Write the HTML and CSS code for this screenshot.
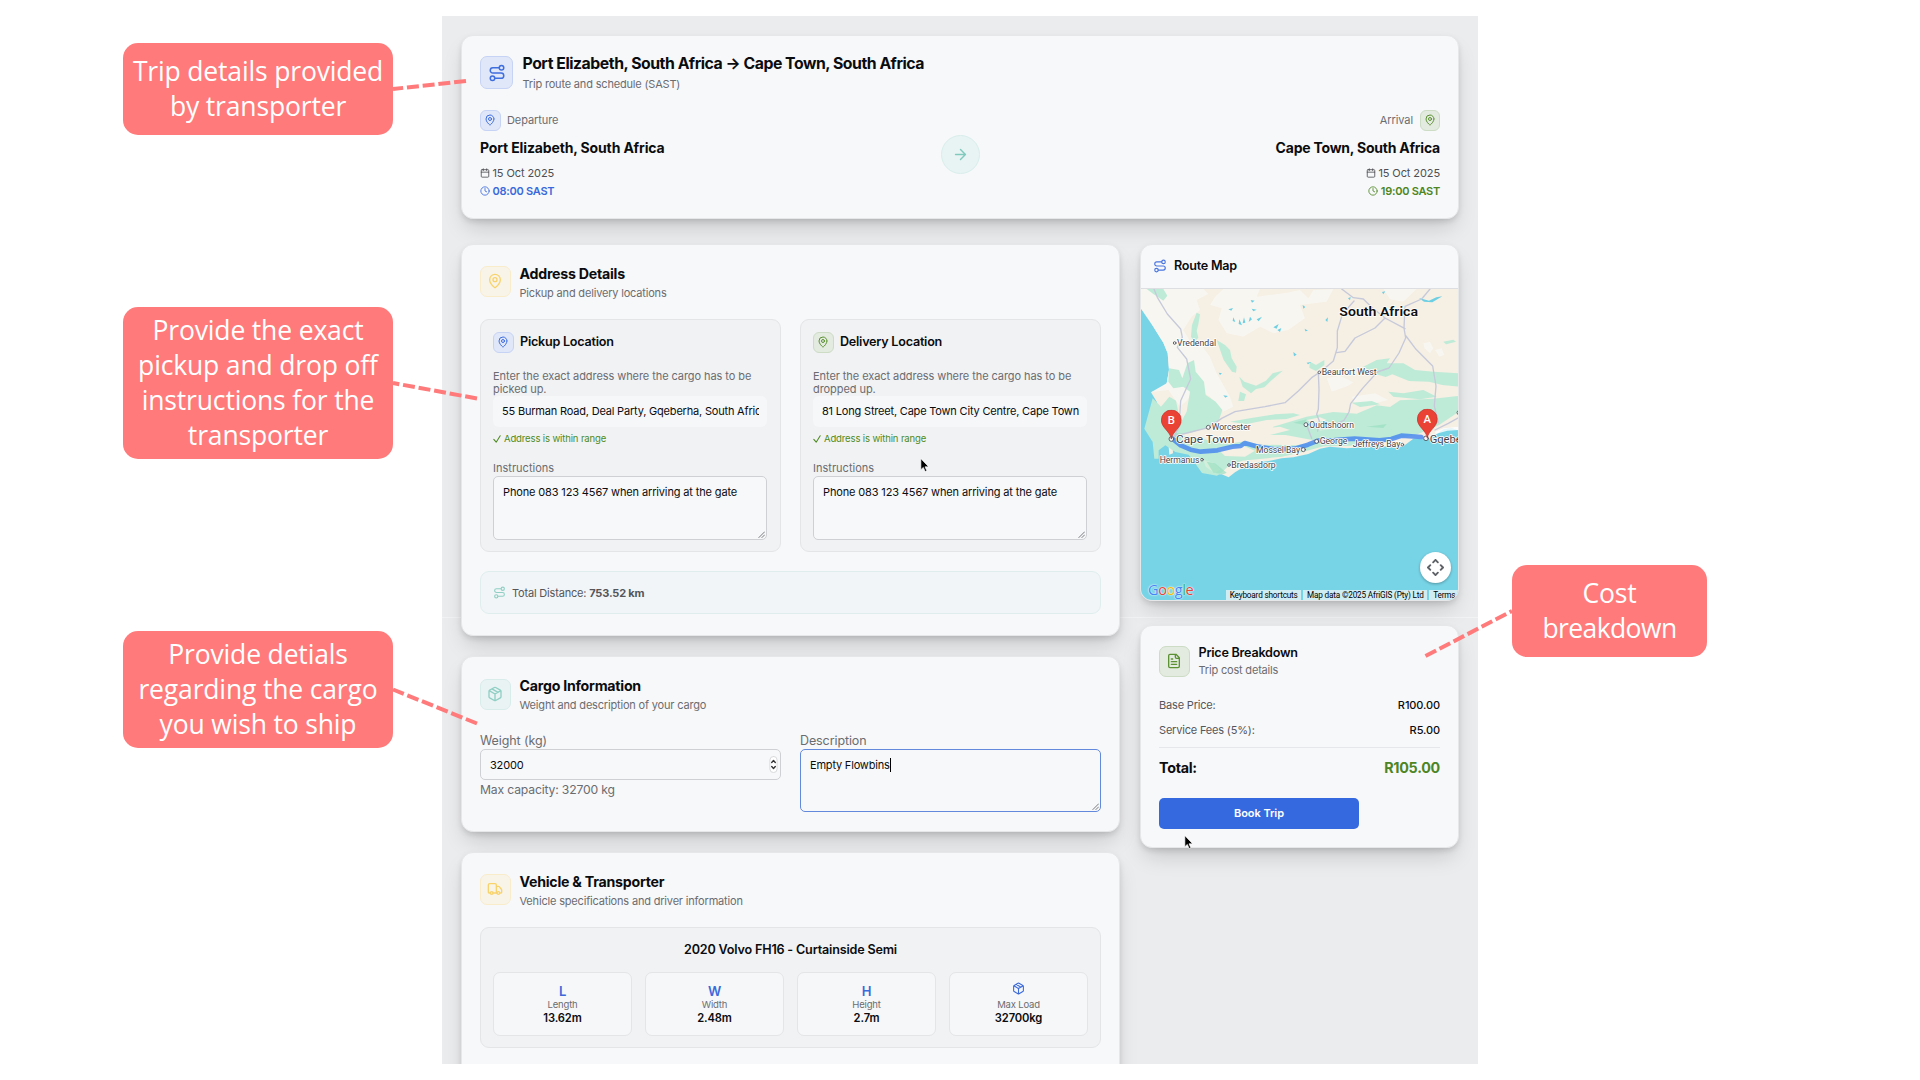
FILE: index.html
```html
<!DOCTYPE html>
<html lang="en">
<head>
<meta charset="utf-8">
<title>Trip booking guide</title>
<link rel="stylesheet" href="styles.css">
</head>
<body>
<svg class="sprite" aria-hidden="true">
  <symbol id="route" viewBox="0 0 24 24"><circle cx="6" cy="19" r="3"/><path d="M9 19h8.5a3.5 3.5 0 0 0 0-7h-11a3.5 3.5 0 0 1 0-7H15"/><circle cx="18" cy="5" r="3"/></symbol>
  <symbol id="pin" viewBox="0 0 24 24"><path d="M20 10c0 5-5.5 10.2-7.4 11.8a1 1 0 0 1-1.2 0C9.500 20.200 4 15 4 10a8 8 0 0 1 16 0"/><circle cx="12" cy="10" r="3"/></symbol>
  <symbol id="calendar" viewBox="0 0 24 24"><path d="M8 2v4M16 2v4M3 10h18"/><rect x="3" y="4" width="18" height="18" rx="2"/></symbol>
  <symbol id="clock" viewBox="0 0 24 24"><circle cx="12" cy="12" r="10"/><path d="M12 6v6l4 2"/></symbol>
  <symbol id="arrow" viewBox="0 0 24 24"><path d="M5 12h14M12 5l7 7-7 7"/></symbol>
  <symbol id="box" viewBox="0 0 24 24"><path d="M11 21.700a2 2 0 0 0 2 0l7-4a2 2 0 0 0 1-1.700V8a2 2 0 0 0-1-1.700l-7-4a2 2 0 0 0-2 0l-7 4A2 2 0 0 0 3 8v8a2 2 0 0 0 1 1.700zM12 22V12M3.300 7 12 12l8.700-5M7.500 4.300l9 5.150"/></symbol>
  <symbol id="truck" viewBox="0 0 24 24"><path d="M14 18V6a2 2 0 0 0-2-2H4a2 2 0 0 0-2 2v11a1 1 0 0 0 1 1h2M15 18H9M19 18h2a1 1 0 0 0 1-1v-3.650a1 1 0 0 0-.22-.62l-3.480-4.350A1 1 0 0 0 17.520 8H14"/><circle cx="17" cy="18" r="2"/><circle cx="7" cy="18" r="2"/></symbol>
  <symbol id="file" viewBox="0 0 24 24"><path d="M15 2H6a2 2 0 0 0-2 2v16a2 2 0 0 0 2 2h12a2 2 0 0 0 2-2V7zM14 2v4a2 2 0 0 0 2 2h4M10 9H8M16 13H8M16 17H8"/></symbol>
  <symbol id="pointer" viewBox="0 0 12 18"><path d="M1 1v13l3-2.700 2.200 5 2-1-2.200-4.700h4.200z" fill="#000" stroke="#fff" stroke-width=".8"/></symbol>
  <symbol id="marker" viewBox="0 0 62 90"><path d="M31 87C28 65 1 55 1 31a30 30 0 0 1 60 0C61 55 34 65 31 87z" fill="#ea4335" stroke="#c5221f" stroke-width="2"/></symbol>
</svg>

<div class="stage">
  <aside class="notes notes-left">
    <div class="callout note-trip"><span>Trip details provided</span><span>by transporter</span></div>
    <div class="callout note-address"><span>Provide the exact</span><span>pickup and drop off</span><span>instructions for the</span><span>transporter</span></div>
    <div class="callout note-cargo"><span>Provide detials</span><span>regarding the cargo</span><span>you wish to ship</span></div>
  </aside>

  <main class="panel">
    <section class="card trip">
      <header class="head">
        <div class="tile blue lg"><svg><use href="#route"/></svg></div>
        <div><h1>Port Elizabeth, South Africa → Cape Town, South Africa</h1><p class="sub">Trip route and schedule (SAST)</p></div>
      </header>
      <div class="route">
        <div class="stop">
          <div class="stop-label"><div class="tile blue sm"><svg><use href="#pin"/></svg></div><span>Departure</span></div>
          <strong class="city">Port Elizabeth, South Africa</strong>
          <div class="when"><svg><use href="#calendar"/></svg><span>15 Oct 2025</span></div>
          <div class="when time-blue"><svg><use href="#clock"/></svg><span>08:00 SAST</span></div>
        </div>
        <div class="go"><svg><use href="#arrow"/></svg></div>
        <div class="stop end">
          <div class="stop-label"><span>Arrival</span><div class="tile green sm"><svg><use href="#pin"/></svg></div></div>
          <strong class="city">Cape Town, South Africa</strong>
          <div class="when"><svg><use href="#calendar"/></svg><span>15 Oct 2025</span></div>
          <div class="when time-green"><svg><use href="#clock"/></svg><span>19:00 SAST</span></div>
        </div>
      </div>
    </section>

    <div class="columns">
      <div class="col-left">
        <section class="card address">
          <header class="head">
            <div class="tile yellow"><svg><use href="#pin"/></svg></div>
            <div><h2>Address Details</h2><p class="sub">Pickup and delivery locations</p></div>
          </header>
          <div class="pair">
            <div class="place">
              <div class="place-head"><div class="tile blue sm"><svg><use href="#pin"/></svg></div><h3>Pickup Location</h3></div>
              <label class="hint">Enter the exact address where the cargo has to be<br>picked up.</label>
              <div class="addr"><span>55 Burman Road, Deal Party, Gqeberha, South Africa</span></div>
              <div class="ok"><svg viewBox="0 0 10 10"><path d="M1 5.500 4 9 9 1"/></svg><span>Address is within range</span></div>
              <label class="ins">Instructions</label>
              <div class="area"><span>Phone 083 123 4567 when arriving at the gate</span><svg class="grip" viewBox="0 0 8 8"><path d="M1 7.500 7.500 1M4.500 7.500l3-3"/></svg></div>
            </div>
            <div class="place">
              <div class="place-head"><div class="tile green sm"><svg><use href="#pin"/></svg></div><h3>Delivery Location</h3></div>
              <label class="hint">Enter the exact address where the cargo has to be<br>dropped up.</label>
              <div class="addr"><span>81 Long Street, Cape Town City Centre, Cape Town</span></div>
              <div class="ok"><svg viewBox="0 0 10 10"><path d="M1 5.500 4 9 9 1"/></svg><span>Address is within range</span></div>
              <label class="ins">Instructions</label>
              <div class="area"><span>Phone 083 123 4567 when arriving at the gate</span><svg class="grip" viewBox="0 0 8 8"><path d="M1 7.500 7.500 1M4.500 7.500l3-3"/></svg></div>
            </div>
          </div>
          <div class="distance"><svg><use href="#route"/></svg><span>Total Distance: <b>753.52 km</b></span></div>
        </section>

        <section class="card cargo">
          <header class="head">
            <div class="tile teal"><svg><use href="#box"/></svg></div>
            <div><h2>Cargo Information</h2><p class="sub">Weight and description of your cargo</p></div>
          </header>
          <div class="pair">
            <div class="field"><label>Weight (kg)</label>
              <div class="number"><span>32000</span><svg class="spin" viewBox="0 0 9 19"><rect x=".5" y=".5" width="8" height="18" rx="4" fill="#fff" stroke="#d5d6d8" stroke-width="1"/><path d="M2.500 7.300l2-2.300 2 2.300M2.500 11.700l2 2.300 2-2.300" fill="none" stroke="#333" stroke-width="1.500"/></svg></div>
              <p class="cap">Max capacity: 32700 kg</p></div>
            <div class="field"><label>Description</label>
              <div class="area focus"><span>Empty Flowbins</span><i class="caret"></i><svg class="grip" viewBox="0 0 8 8"><path d="M1 7.500 7.500 1M4.500 7.500l3-3"/></svg></div></div>
          </div>
        </section>

        <section class="card vehicle">
          <header class="head">
            <div class="tile yellow"><svg><use href="#truck"/></svg></div>
            <div><h2>Vehicle &amp; Transporter</h2><p class="sub">Vehicle specifications and driver information</p></div>
          </header>
          <div class="spec">
            <h3>2020 Volvo FH16 - Curtainside Semi</h3>
            <div class="dims">
              <div class="dim"><b class="k">L</b><small>Length</small><strong>13.62m</strong></div>
              <div class="dim"><b class="k">W</b><small>Width</small><strong>2.48m</strong></div>
              <div class="dim"><b class="k">H</b><small>Height</small><strong>2.7m</strong></div>
              <div class="dim"><svg><use href="#box"/></svg><small>Max Load</small><strong>32700kg</strong></div>
            </div>
          </div>
        </section>
      </div>

      <div class="col-right">
        <section class="card map-card">
          <header class="map-head"><svg><use href="#route"/></svg><h3>Route Map</h3></header>
          <div class="map">
            <svg class="terrain" viewBox="120 177 957 936" preserveAspectRatio="none">
              <rect x="120" y="177" width="957" height="936" fill="#77d4e7"/>
              <path fill="#f5efe4" d="M120 177H1077V602L1055 594 1030 598 1010 612 985 628 940 626 908 650 870 652 830 645 790 652 740 655 690 650 660 656 625 672 580 682 545 685 510 692 470 698 430 712 405 727 386 742 365 733 340 733 318 712 308 690 290 676 268 672 258 650 235 640 218 645 219 670 208 674 205 640 212 622 200 600 185 575 178 540 170 515 153 487 185 476 200 460 207 420 203 370 190 338 160 290 140 255 120 232z"/>
              <g fill="#f8f6f0">
                <path d="M120 177H310L325 192 290 210 300 240 275 260 250 300 268 330 300 340 330 380 350 430 390 500 400 530 370 545 330 500 285 470 262 510 240 530 205 480 153 487 200 460 207 420 203 370 190 338 160 290 120 232z"/>
                <path d="M370 177 480 177 470 200 560 188 600 180 625 205 640 180 700 177 680 215 600 225 615 265 565 300 520 310 480 290 430 320 380 310 355 270 365 235 330 225 345 200z"/>
                <path d="M850 177 950 177 910 215 870 208zM970 340l20-5 10 20-10 15-17-15zM1005 360l20-5 8 20-15 5zM680 445l40-8 40 20-15 10-50 18zM755 500l70-10 40 20-60 15-40-5z"/>
              </g>
              <g fill="#bdebd7">
                <path d="M140 177h50l12 20-12 15-30-20zM290 248l10 5-5 30-5 20 5 20-12 12-10-15 3-35z"/>
                <path d="M350 330l25 15 15 15 5 25 15 25-2 18-12-3-25-35zM418 440l15 15 35 12 30-15 20-22 30-8-35 30-20 20-25 5-15 13-25-20zM420 485l18 8-6 20-17 0z"/>
                <path d="M207 415l30 5 10 25 15-45 20-10 5 35 25 30 5 40 30 20 20 25-10 30-40 25-50 15-42 0 35-65 10-60-20-15-30 5-15-20z"/>
                <path d="M158 505l25 25 25-30 20 12 10 50 10 55 60 10 70 15 60-8 40 10 110 2 70-10 80-8 90 0 45-5-2 14-60-3-60 13-80 2-55 15-70 16-120 12-45 20-15 15-15 10-45-8-25-35-15-20-40-8-30-20-20 15 0 25-13 0-5-50-25-40z"/>
                <path d="M390 575l60-10 75-12 55-3 20 5-40 12-60 3-60 12zM520 590l100-30 80-14 70 5 60-25 40 5 30-20 100-5 77-8V545l-60 40-70 30-90 15-150-5-70 5-80-15-50 0z"/>
                <path d="M790 410l40-20 40-5-10 15 50 0 35 20 55 5 77 5v40l-50-5-40-10-60-2-50-20-20 8-40-12zM630 395l18 10 25-15 0 15-25 18-20-10zM865 485l45 5 60-10 40 20-50 8-80-8zM755 518l60-5 25 10-60 8zM1030 335l30-6 8 6-30 8z"/>
              </g>
              <path fill="#f5efe4" d="M440 590l30 8 70-8 30 10-60 15-70 0zM350 655l80-8 35 15-30 18-60-2zM620 570l40-8 20 8-40 10z"/>
              <g fill="#d3efdc"><path d="M210 545l20 5-5 50-15-20zM310 690l30 8 20 20-15 12-28-20zM650 590l90-12 10 10-90 14z"/></g>
              <g fill="#9be0c2"><path d="M320 695l25 5 35 28-10 5-30-5z M580 578l40-10-10 16zM800 590l60-8-10 12zM225 610l25 0-5 10-20 2z" opacity=".7"/></g>
              <path fill="#fff" d="M1005 605l25-10 47-5v10l-35 2-35 10z" opacity=".8"/>
              <path fill="#77d4e7" d="M1000 622l35-16 42-4v40h-77z"/>
              <g fill="#6dcfe3"><path d="M385 238l14-4-5 8zM452 210l12 2-8 6zM400 262l6 14-8-3zM418 268l8 18-10-4zM432 262l4 16-8 2zM450 260l6 8-10 8zM470 268l16-8-10 14zM455 236l15 3-10 5zM520 292l16-10-6 14zM532 300l12-6-4 12zM608 225l8 6-6 5zM676 270l8-8-2 14zM614 296l10 6-8 2zM580 366l10 8-8 5zM620 398l14-2-10 7zM356 428l10 2-6 5zM370 496l14 2-8 5zM846 186l10-2-6 9zM744 205l8-4-2 10zM957 204l30 8 22-10 18-3-30 18-25-2z"/></g>
              <g fill="none" stroke="#c6c9da" stroke-width="4" stroke-linejoin="round">
                <path d="M162 177l10 25 30 50 40 45 5 25-15 30 28 35 12 60-30 65-5 80-20 35"/>
                <path d="M225 618l100-25 40-28 40-20 90-15 60-12 40-35 40-40 30-20 35-30 12-40 0-50 15-50 35-40"/>
                <path d="M725 177l35 26 30 4 25 25 40 32 60 32M990 177l-25 30-50 22-3 65 5 30-20 45-30 45-35 12-45 50-35 45-5 25-15 25-35 15-30 10M855 264l-30 30-60 30-30 40-25 4M918 318l30 40 50 50 10 60-5 60 12 50M655 428l2 50-2 60-5 15 8 20-5 30M1005 600l40-20 32-18M620 585l15 40"/>
              </g>
              <path d="M217 626l25 20 30 13 30 6 50-4 45-11 25-2 12-9 40 11 50 8 60-2 40-12 30-12 50-2 60-4 75 5 35-4 30-10 60 4" fill="none" stroke="#4a8af0" stroke-width="14" opacity=".85" stroke-linejoin="round"/>
              <g fill="#f4f6f7" stroke="#4a4f57" stroke-width="2.500"><circle cx="224" cy="339" r="4"/><circle cx="658" cy="427" r="4"/><circle cx="325" cy="592" r="6"/><circle cx="618" cy="584" r="6"/><circle cx="650" cy="634" r="6"/><circle cx="610" cy="659" r="6"/><circle cx="387" cy="705" r="4"/><circle cx="306" cy="689" r="4"/><circle cx="907" cy="644" r="4"/><circle cx="978" cy="625" r="7"/><circle cx="1077" cy="548" r="6"/><circle cx="214" cy="627" r="7"/></g>
              <g class="labels">
                <text x="231" y="348" textLength="117" lengthAdjust="spacingAndGlyphs">Vredendal</text><text x="665" y="436" textLength="165" lengthAdjust="spacingAndGlyphs">Beaufort West</text><text x="335" y="601" textLength="117" lengthAdjust="spacingAndGlyphs">Worcester</text><text x="628" y="593" textLength="134" lengthAdjust="spacingAndGlyphs">Oudtshoorn</text><text x="659" y="643" textLength="83" lengthAdjust="spacingAndGlyphs">George</text><text x="758" y="652" textLength="143" lengthAdjust="spacingAndGlyphs">Jeffreys Bay</text><text x="468" y="668" textLength="132" lengthAdjust="spacingAndGlyphs">Mossel Bay</text><text x="179" y="698" textLength="119" lengthAdjust="spacingAndGlyphs">Hermanus</text><text x="394" y="714" textLength="133" lengthAdjust="spacingAndGlyphs">Bredasdorp</text>
                <text class="big" x="228" y="639" textLength="175" lengthAdjust="spacingAndGlyphs">Cape Town</text><text class="big" x="989" y="639" textLength="144" lengthAdjust="spacingAndGlyphs">Gqeberha</text>
                <text class="country" x="718" y="258" textLength="236" lengthAdjust="spacingAndGlyphs">South Africa</text>
              </g>
              <use href="#marker" x="183" y="539" width="62" height="90"/><use href="#marker" x="951" y="536" width="62" height="90"/>
              <g class="pin-letter"><text x="214" y="583">B</text><text x="982" y="580">A</text></g>
            </svg>
            <div class="google"><span class="g1">G</span><span class="g2">o</span><span class="g3">o</span><span class="g1">g</span><span class="g4">l</span><span class="g2">e</span></div>
            <div class="compass"><svg viewBox="0 0 18 18"><path d="M6.500 3.500 9 1l2.500 2.500M6.500 14.500 9 17l2.500-2.500M3.500 6.500 1 9l2.500 2.500M14.500 6.500 17 9l-2.500 2.500"/></svg></div>
            <div class="credits"><span>Keyboard shortcuts</span><span>Map data ©2025 AfriGIS (Pty) Ltd</span><span>Terms</span></div>
          </div>
        </section>

        <section class="card price">
          <header class="head">
            <div class="tile green"><svg><use href="#file"/></svg></div>
            <div><h3>Price Breakdown</h3><p class="sub">Trip cost details</p></div>
          </header>
          <div class="row"><span>Base Price:</span><b>R100.00</b></div>
          <div class="row"><span>Service Fees (5%):</span><b>R5.00</b></div>
          <div class="row total"><strong>Total:</strong><strong class="sum">R105.00</strong></div>
          <button class="book">Book Trip</button>
        </section>
      </div>
    </div>
  </main>

  <aside class="notes notes-right">
    <div class="callout"><span>Cost</span><span class="tight">breakdown</span></div>
  </aside>

  <svg class="links" viewBox="0 0 1920 1080">
    <path d="M466 81 393 89M477 398.500 393 383M477 723.500 393 689.500M1425.500 656 1512 611"/>
  </svg>
  <svg class="cursor c1"><use href="#pointer"/></svg>
  <svg class="cursor c2"><use href="#pointer"/></svg>
</div>
</body>
</html>
```

FILE: styles.css
```css
* { box-sizing: border-box; }
body { margin: 0; background: #fff; font-family: Inter, "Liberation Sans", sans-serif; color: #0b0c0e; letter-spacing: -.18px; }
h1, h2, h3, p { margin: 0; }
svg { display: block; fill: none; stroke: currentColor; stroke-width: 2; stroke-linecap: round; stroke-linejoin: round; letter-spacing: 0; }
.sprite { position: absolute; width: 0; height: 0; }
.stage { position: relative; width: 1920px; height: 1080px; overflow: hidden; display: flex; align-items: flex-start; }

/* Annotation callouts */
.notes-left { width: 442px; padding: 43px 0 0 123px; display: flex; flex-direction: column; gap: 172px; }
.notes-right { padding: 565px 0 0 34px; }
.callout { width: 270px; border-radius: 15px; background: #ff7b7b; color: #fff; font: 26.500px/35px "Open Sans", sans-serif; letter-spacing: -.16px; display: flex; flex-direction: column; align-items: center; justify-content: center; white-space: nowrap; }
.note-trip { height: 92px; }
.note-address { height: 152px; }
.note-cargo { height: 117px; }
.notes-right .callout { width: 195px; height: 92px; }
.callout .tight { letter-spacing: -.6px; }

/* Cards */
.panel { width: 1036px; height: 1048px; margin-top: 16px; padding: 19px; background: linear-gradient(#f2f3f4, #f2f3f4) 0 601px / 100% 1px no-repeat #ebecee; overflow: hidden; flex: none; }
.card { background: #f7f8fa; border: 1px solid #e6e7e9; border-radius: 12px; padding: 21px 18px; box-shadow: 0 12px 22px -5px rgba(0, 0, 0, .17), 0 3px 6px -1px rgba(0, 0, 0, .14); }
.trip { height: 184px; padding-top: 20px; }
.columns { display: grid; grid-template-columns: 659px 319px; gap: 20px; margin-top: 25px; }
.col-left, .col-right { display: flex; flex-direction: column; gap: 20px; }
.col-right { gap: 24px; }
.address { height: 392px; }
.cargo { height: 176px; padding-top: 22px; }
.vehicle { height: 300px; }
.map-card { height: 357px; padding: 0; overflow: hidden; }
.price { height: 223px; padding-top: 20px; }

.head { display: flex; gap: 9px; height: 31px; }
.trip .head { gap: 9.500px; height: 33px; }
.head h1 { font-size: 15.800px; line-height: 20px; font-weight: 700; letter-spacing: -.46px; margin: -2px 0 2px; }
.head h2 { font-size: 14.200px; line-height: 18px; font-weight: 700; letter-spacing: -.25px; margin-top: -1px; }
.cargo .head h2 { margin-top: -2px; }
.head h3 { margin-top: -1px; }
.sub { font-size: 11px; line-height: 16px; color: #6b6c70; }
.head h2 + .sub { margin-top: 2px; }
h3 { font-size: 12.600px; line-height: 16px; font-weight: 600; letter-spacing: -.24px; }
.price .sub { margin-top: 1px; }

.tile { flex: none; width: 30.500px; height: 30.500px; border-radius: 7px; border: 1px solid; display: grid; place-items: center; }
.tile svg { width: 16px; height: 16px; }
.tile.lg { width: 33px; height: 33px; }
.tile.lg svg { width: 18px; height: 18px; }
.tile.sm { width: 20.500px; height: 20.500px; border-radius: 6px; }
.tile.sm svg { width: 12px; height: 12px; }
.blue { background: #e0e7f8; border-color: #c6d3f4; color: #3f6ede; }
.green { background: #e3eadf; border-color: #cddcc5; color: #5b9132; }
.yellow { background: #f9f4e8; border-color: #f9ecca; color: #f8d36c; }
.teal { background: #e9f3f4; border-color: #d8ecea; color: #8fcfc4; }

/* Trip route */
.route { display: flex; justify-content: space-between; margin-top: 21px; }
.stop { width: 300px; display: flex; flex-direction: column; }
.end { align-items: flex-end; }
.stop-label { display: flex; align-items: center; gap: 6.500px; height: 20.500px; font-size: 11px; letter-spacing: -.08px; color: #6b6c70; }
.city { font-size: 14px; line-height: 18px; margin: 8px 0 7px; letter-spacing: -.14px; }
.end .city { letter-spacing: -.22px; }
.when { display: flex; align-items: center; gap: 2.500px; font-size: 11px; height: 18.500px; color: #4d4e52; letter-spacing: -.1px; }
.when svg { width: 10px; height: 10px; }
.time-blue, .time-green { font-weight: 600; letter-spacing: -.26px; }
.time-blue { color: #3a69dc; }
.time-green { color: #4d8523; }
.go { width: 39px; height: 39px; margin-top: 25px; border-radius: 50%; background: #e8f3f4; border: 1px solid #d9eeeb; color: #7fcabd; display: grid; place-items: center; }
.go svg { width: 17px; height: 17px; }

/* Pickup and delivery */
.pair { display: grid; grid-template-columns: 301px 301px; gap: 19px; margin-top: 22px; }
.place { height: 233px; padding: 12px 12px; background: #f1f2f4; border: 1px solid #e4e5e7; border-radius: 9px; }
.place-head { display: flex; align-items: center; gap: 6.500px; }
.hint { display: block; margin-top: 17px; font-size: 11px; line-height: 13px; color: #6b6c70; white-space: nowrap; letter-spacing: -.07px; }
.addr { height: 31px; width: 274px; padding: 0 8px 0 9px; background: #f6f7f9; border-radius: 6px; font-size: 11px; line-height: 31px; white-space: nowrap; overflow: hidden; letter-spacing: -.19px; }
.addr span { display: block; overflow: hidden; }
.ok { display: flex; align-items: center; gap: 3px; margin-top: 5px; height: 14px; font-size: 9.500px; letter-spacing: -.13px; color: #4d8a22; }
.ok svg { width: 8px; height: 8px; stroke-width: 1.300; }
.ins { display: block; margin-top: 15px; font-size: 11px; line-height: 15px; color: #6b6c70; letter-spacing: .02px; }
.area { position: relative; width: 274px; height: 64px; padding: 8px 9px; border: 1px solid #cfd0d3; border-radius: 5px; background: #f7f8fa; font-size: 11px; line-height: 15px; white-space: nowrap; letter-spacing: -.14px; }
.grip { position: absolute; right: 1px; bottom: 1px; width: 7px; height: 7px; stroke: #55575b; stroke-width: .9; }
.distance { display: flex; align-items: center; gap: 6px; height: 43px; margin-top: 19px; padding: 0 12px; border: 1px solid #dfeeed; border-radius: 9px; background: #f1f5f7; font-size: 11px; color: #55565a; }
.distance svg { width: 13px; height: 13px; color: #8fcfc4; }

/* Cargo */
.cargo .pair { margin-top: 22px; }
.field label { display: block; font-size: 12.500px; line-height: 17px; color: #6b6c70; letter-spacing: -.1px; }
.number { display: flex; align-items: center; justify-content: space-between; height: 31px; padding: 0 2px 0 9px; border: 1px solid #cfd0d3; border-radius: 5px; font-size: 11px; }
.spin { width: 9px; height: 17px; }
.cap { font-size: 12.200px; line-height: 16px; margin-top: 2px; color: #6b6c70; letter-spacing: -.17px; }
.field .area { width: 301px; height: 63px; display: flex; letter-spacing: -.2px; }
.area.focus { border-color: #6389dc; }
.caret { width: 1px; height: 14px; background: #000; }

/* Vehicle */
.spec { height: 121px; margin-top: 22px; padding: 14px 12px; background: #f1f2f4; border: 1px solid #e4e5e7; border-radius: 9px; }
.spec h3 { text-align: center; letter-spacing: -.19px; }
.dims { display: grid; grid-template-columns: repeat(4, 1fr); gap: 13px; margin-top: 14px; }
.dim { height: 64px; padding-top: 11px; border: 1px solid #e4e5e7; border-radius: 7px; background: #f6f7f9; display: flex; flex-direction: column; align-items: center; }
.dim svg { width: 13px; height: 13px; color: #3a69dc; margin: -2px 0 3px; }
.dim .k { font-size: 13px; line-height: 14px; color: #3a69dc; font-weight: 600; }
.dim small { font-size: 9.500px; line-height: 13px; }
.dim small { color: #6b6c70; }
.dim strong { font-size: 11.200px; line-height: 15px; font-weight: 600; letter-spacing: -.12px; }

/* Map */
.map-head { display: flex; align-items: center; gap: 7px; height: 43px; padding: 0 0 1px 12px; }
.map-head svg { width: 14px; height: 14px; color: #4a76e0; }
.map { position: relative; height: 313px; margin: 0 -1px; border-top: 1px solid #dcdee2; }
.terrain { width: 319px; height: 312px; stroke: none; }
.labels { font: 25px Roboto, sans-serif; fill: #3f4247; stroke: #fff; stroke-width: 5px; paint-order: stroke; }
.labels .big { font-size: 34px; }
.labels .country { font-size: 41px; font-weight: 600; fill: #0e0f11; }
.pin-letter { font: 500 34px Roboto, sans-serif; fill: #fff; text-anchor: middle; }
.google { position: absolute; left: 8px; bottom: 1px; font: 500 14.500px/20px "Open Sans", sans-serif; text-shadow: 0 0 1px #fff, 0 0 2px #fff; letter-spacing: -.4px; }
.g1 { color: #4285f4; }
.g2 { color: #ea4335; }
.g3 { color: #fbbc05; }
.g4 { color: #34a853; }
.compass { position: absolute; right: 8px; bottom: 18px; width: 31px; height: 31px; border-radius: 50%; background: #fff; box-shadow: 0 1px 3px rgba(0, 0, 0, .3); display: grid; place-items: center; color: #5f6368; }
.compass svg { width: 17px; height: 17px; }
.credits { position: absolute; right: 0; bottom: 0; display: flex; gap: 2px; font: 8.200px/11px Roboto, sans-serif; letter-spacing: -.17px; color: #000; white-space: nowrap; }
.credits span { padding: 0 3.700px; background: #d1edf4; }

/* Price */
.price .head { margin-bottom: 15.500px; }
.row { display: flex; justify-content: space-between; align-items: center; height: 25px; font-size: 11px; color: #55565a; }
.row b { font-weight: 500; color: #0b0c0e; letter-spacing: -.1px; }
.total { height: 41px; margin-top: 4px; border-top: 1px solid #e6e7ea; font-size: 14.300px; letter-spacing: -.26px; color: #0b0c0e; }
.sum { color: #4d8523; }
.book { display: block; width: 200px; height: 31px; margin-top: 10px; padding: 0; border: 0; border-radius: 5px; background: #3469e0; color: #fff; font: 600 11px Inter, sans-serif; letter-spacing: -.06px; }

/* Connectors and pointers drawn over the panel */
.links { position: absolute; inset: 0; width: 1920px; height: 1080px; stroke: #ff7b7b; stroke-width: 4; stroke-linecap: butt; stroke-dasharray: 12 3.800; }
.cursor { position: absolute; width: 10px; height: 15px; stroke: none; }
.c1 { left: 920px; top: 458px; }
.c2 { left: 1184px; top: 835px; }
```
